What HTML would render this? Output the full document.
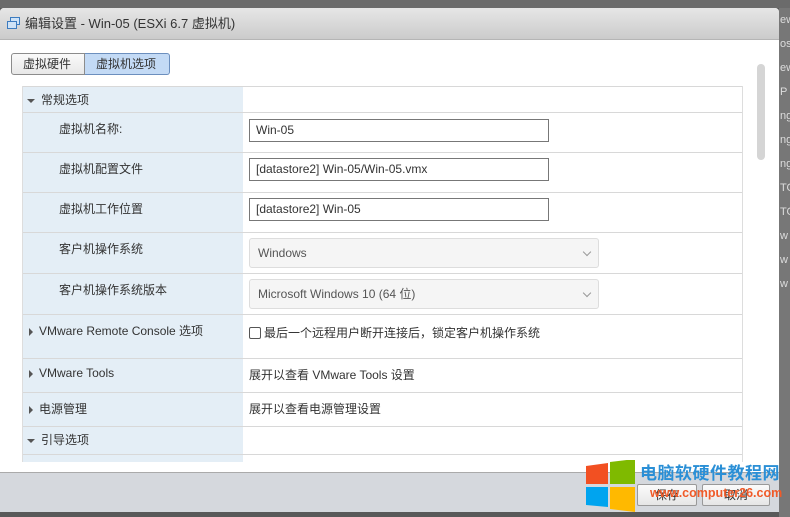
<!DOCTYPE html>
<html><head><meta charset="utf-8"><style>
*{margin:0;padding:0;box-sizing:border-box}
body{width:790px;height:517px;background:#595959;position:relative;overflow:hidden;font-family:"Liberation Sans","Noto Sans CJK SC",sans-serif;font-size:12px;color:#333}
.top{position:absolute;left:0;top:0;width:790px;height:8px;background:#6b6b6b}
.rside{position:absolute;left:779px;top:8px;width:11px;height:509px;background:#777;color:#ddd;font-size:11px;line-height:24px;overflow:hidden;white-space:nowrap}
.dlg{position:absolute;left:0;top:8px;width:779px;height:504px;background:#fff;border-radius:4px 4px 0 0;overflow:hidden}
.title{height:32px;background:linear-gradient(#e6e6e6,#cbcbcb);border-bottom:1px solid #b5b5b5;font-size:13px;line-height:31px;padding-left:25px;color:#333;position:relative}
.title .ic{position:absolute;left:7px;top:9px;width:13px;height:12px}
.tabs{position:absolute;left:11px;top:45px;height:22px;display:flex}
.tab{height:22px;line-height:20px;border:1px solid #8c8c8c;padding:0 11px;background:linear-gradient(#fafafa,#e8e8e8);font-size:12px}
.tab.a{background:#c3daf5;border-color:#6c8fbe}
.tab:first-child{border-radius:3px 0 0 3px;width:74px}
.tab:last-child{border-radius:0 3px 3px 0;width:85px;border-left:none}
.tbl{position:absolute;left:22px;top:78px;width:721px;height:376px;overflow:hidden;border-left:1px solid #ddd;border-right:1px solid #ddd}
.tbl .lc{position:absolute;left:0;top:0;width:220px;height:400px;background:#e4eef6}
.row{position:absolute;left:0;width:721px;border-top:1px solid #d8d8d8}
.lb{position:absolute;top:7px;font-size:12px}
.in{position:absolute;left:226px;height:23px;border:1px solid #777;background:#fff;padding-left:6px;line-height:21px;width:300px}
.sel{position:absolute;left:226px;width:350px;height:30px;border:1px solid #ddd;border-radius:3px;background:#f5f5f5;padding-left:8px;line-height:28px;color:#555}
.sel:after{content:"";position:absolute;right:8px;top:10px;width:5px;height:5px;border-right:1px solid #999;border-bottom:1px solid #999;transform:rotate(45deg)}
.tri{display:inline-block;width:0;height:0;margin-right:6px;vertical-align:middle}
.tr{border-left:4px solid #555;border-top:4px solid transparent;border-bottom:4px solid transparent;margin-left:6px;margin-right:6px}
.td{border-top:4px solid #555;border-left:4px solid transparent;border-right:4px solid transparent;margin-left:4px}
.val{position:absolute;left:226px;top:7px}
.foot{position:absolute;left:0;top:464px;width:779px;height:40px;background:#d5d8dd;border-top:1px solid #aaa}
.btn{position:absolute;top:11px;height:22px;border:1px solid #999;border-radius:2px;background:linear-gradient(#fbfbfb,#e6e6e6);text-align:center;line-height:20px}
.sb{position:absolute;left:757px;top:56px;width:8px;height:96px;background:#d5d5d5;border-radius:4px}
</style></head><body>
<div class="top"></div>
<div class="rside"><div style="padding-left:1px">ew<br>os<br>ew<br>P<br>ng<br>ng<br>ng<br>TO<br>TO<br>w<br>w<br>w</div></div>
<div class="dlg">
<div class="title"><svg class="ic" viewBox="0 0 13 12"><rect x="3.5" y="0.5" width="9" height="7" fill="#cfe3f7" stroke="#3d7cc0"/><rect x="0.5" y="4.5" width="9" height="7" fill="#cfe3f7" stroke="#3d7cc0"/></svg>编辑设置 - Win-05 (ESXi 6.7 虚拟机)</div>
<div class="tabs"><div class="tab">虚拟硬件</div><div class="tab a">虚拟机选项</div></div>
<div class="tbl"><div class="lc"></div>
<div class="row" style="top:0;height:26px"><div class="lb" style="left:0;top:4px"><span class="tri td"></span>常规选项</div></div>
<div class="row" style="top:26px;height:40px"><div class="lb" style="left:36px">虚拟机名称:</div><div class="in" style="top:6px">Win-05</div></div>
<div class="row" style="top:66px;height:40px"><div class="lb" style="left:36px">虚拟机配置文件</div><div class="in" style="top:5px">[datastore2] Win-05/Win-05.vmx</div></div>
<div class="row" style="top:106px;height:40px"><div class="lb" style="left:36px">虚拟机工作位置</div><div class="in" style="top:5px">[datastore2] Win-05</div></div>
<div class="row" style="top:146px;height:41px"><div class="lb" style="left:36px">客户机操作系统</div><div class="sel" style="top:5px">Windows</div></div>
<div class="row" style="top:187px;height:41px"><div class="lb" style="left:36px">客户机操作系统版本</div><div class="sel" style="top:5px">Microsoft Windows 10 (64 位)</div></div>
<div class="row" style="top:228px;height:44px"><div class="lb" style="left:0"><span class="tri tr"></span>VMware Remote Console 选项</div><div class="val" style="top:9px"><span style="display:inline-block;width:12px;height:12px;border:1px solid #555;border-radius:2px;vertical-align:-2px;margin-right:3px"></span>最后一个远程用户断开连接后，锁定客户机操作系统</div></div>
<div class="row" style="top:272px;height:34px"><div class="lb" style="left:0;top:7px"><span class="tri tr"></span>VMware Tools</div><div class="val" style="top:7px">展开以查看 VMware Tools 设置</div></div>
<div class="row" style="top:306px;height:34px"><div class="lb" style="left:0;top:7px"><span class="tri tr"></span>电源管理</div><div class="val" style="top:7px">展开以查看电源管理设置</div></div>
<div class="row" style="top:340px;height:28px"><div class="lb" style="left:0;top:4px"><span class="tri td"></span>引导选项</div></div>
<div class="row" style="top:368px;height:30px"></div>
</div>
<div class="sb"></div>
<div class="foot">
<div class="btn" style="left:637px;width:60px">保存</div>
<div class="btn" style="left:702px;width:68px">取消</div>
</div>
</div>
<svg style="position:absolute;left:586px;top:460px" width="52" height="52" viewBox="0 0 52 52"><polygon points="0,6 22,3 22,24 0,24" fill="#f25022"/><polygon points="24,2 49,-1 49,24 24,24" fill="#7fba00"/><polygon points="0,27 22,27 22,47 0,45" fill="#00a4ef"/><polygon points="24,27 49,27 49,52 24,49" fill="#ffb900"/></svg>
<div style="position:absolute;left:640px;top:463px;font-size:17px;line-height:22px;font-weight:bold;color:#2a8fd6;white-space:nowrap;letter-spacing:0.5px">电脑软硬件教程网</div>
<div style="position:absolute;left:650px;top:485px;font-size:12.5px;line-height:16px;font-weight:bold;color:#f05a28;white-space:nowrap">www.computer26.com</div>
</body></html>
